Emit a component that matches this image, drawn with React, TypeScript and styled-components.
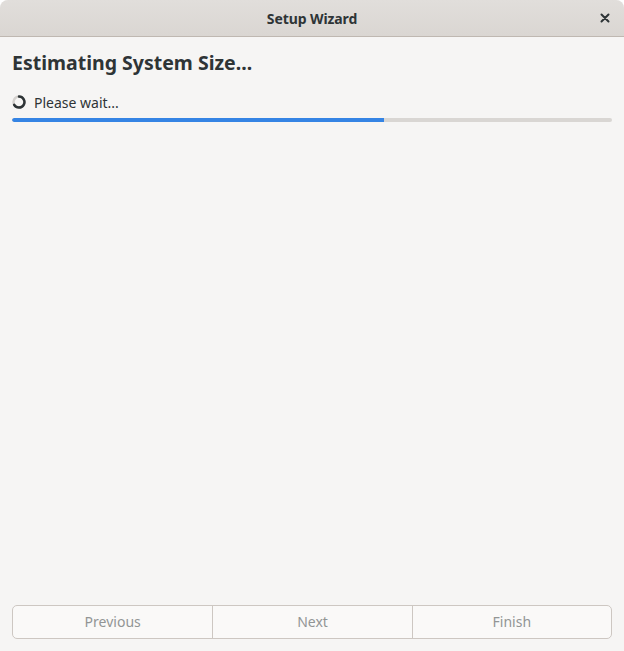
import React from "react";
import styled, { createGlobalStyle } from "styled-components";

const Global = createGlobalStyle`
  html, body { margin: 0; padding: 0; background: #ffffff; }
  body { font-family: "Noto Sans", "Open Sans", sans-serif; }
  * { box-sizing: border-box; }
`;

const Window = styled.div`
  width: 624px;
  height: 651px;
  display: flex;
  flex-direction: column;
  background: #f6f5f4;
  border-radius: 8px 8px 0 0;
  overflow: hidden;
`;

const TitleBar = styled.header`
  height: 37px;
  flex: none;
  display: grid;
  grid-template-columns: 1fr auto 1fr;
  align-items: center;
  background: linear-gradient(#e1dedb, #dad6d2);
  border-bottom: 1px solid #bfb8b1;
  color: #2e3436;
`;

const Title = styled.div`
  grid-column: 2;
  font-size: 14px;
  font-weight: 700;
  letter-spacing: -0.1px;
`;

const CloseButton = styled.div`
  grid-column: 3;
  justify-self: end;
  width: 24px;
  height: 24px;
  margin-right: 7px;
  display: flex;
  align-items: center;
  justify-content: center;
`;

const Content = styled.main`
  flex: 1;
  display: flex;
  flex-direction: column;
  padding: 12px 12px 12px;
`;

const Heading = styled.h1`
  margin: 0;
  font-size: 19.5px;
  line-height: 28px;
  font-weight: 700;
  color: #2e3436;
`;

const StatusRow = styled.div`
  margin-top: 15px;
  display: flex;
  align-items: center;
  gap: 8px;
  height: 20px;
  font-size: 14px;
  color: #2e3436;
`;

const Spinner = styled.svg`
  width: 14px;
  height: 14px;
  flex: none;
`;

const Trough = styled.div`
  margin-top: 6px;
  height: 4px;
  border-radius: 2px;
  background: #d9d6d3;
  overflow: hidden;
`;

const Fill = styled.div`
  height: 100%;
  background: #3584e4;
  border-radius: 2px 0 0 2px;
`;

const Spacer = styled.div`
  flex: 1;
`;

const ButtonGroup = styled.div`
  display: grid;
  grid-template-columns: repeat(3, 1fr);
  height: 34px;
  border: 1px solid #cdc7c2;
  border-radius: 5px;
  overflow: hidden;
  background: #faf9f8;
`;

const NavButton = styled.button`
  border: none;
  background: transparent;
  font-family: inherit;
  font-size: 14px;
  padding: 0 0 1px;
  color: #929595;
  & + & {
    border-left: 1px solid #cdc7c2;
  }
`;

export default function App() {
  const progress = 0.62;
  return (
    <>
      <Global />
      <Window>
        <TitleBar>
          <Title>Setup Wizard</Title>
          <CloseButton>
            <svg width="10" height="10" viewBox="0 0 10 10">
              <path d="M1.5 1.5 L8.5 8.5 M8.5 1.5 L1.5 8.5" stroke="#2e3436" strokeWidth="2" strokeLinecap="round" />
            </svg>
          </CloseButton>
        </TitleBar>
        <Content>
          <Heading>Estimating System Size...</Heading>
          <StatusRow>
            <Spinner viewBox="0 0 14 14">
              <circle cx="7" cy="7" r="5.5" fill="none" stroke="#d5d2cf" strokeWidth="2.5" />
              <path d="M7 1.5 A5.5 5.5 0 1 1 2.2 9.8" fill="none" stroke="#2e3436" strokeWidth="2.5" strokeLinecap="round" />
            </Spinner>
            Please wait...
          </StatusRow>
          <Trough>
            <Fill style={{ width: `${progress * 100}%` }} />
          </Trough>
          <Spacer />
          <ButtonGroup>
            <NavButton disabled>Previous</NavButton>
            <NavButton disabled>Next</NavButton>
            <NavButton disabled>Finish</NavButton>
          </ButtonGroup>
        </Content>
      </Window>
    </>
  );
}
